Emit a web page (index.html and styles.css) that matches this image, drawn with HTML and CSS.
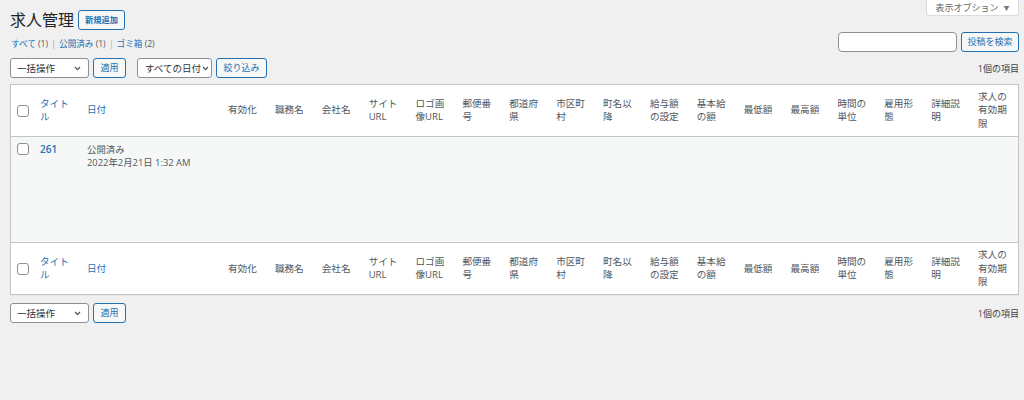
FILE: index.html
```html
<!DOCTYPE html>
<html lang="ja">
<head>
<meta charset="utf-8">
<title>求人管理</title>
<link rel="stylesheet" href="styles.css">
</head>
<body>
<div class="screen-meta-links">
  <button class="screen-tab">表示オプション <span class="tri">▼</span></button>
</div>
<div class="wrap">
  <div class="title-row">
    <h1>求人管理</h1>
    <a class="page-title-action" href="#">新規追加</a>
  </div>
  <div class="filter-row">
    <ul class="subsubsub">
      <li><a href="#">すべて</a> <span class="count">(1)</span> <span class="sep">|</span></li>
      <li><a href="#">公開済み</a> <span class="count">(1)</span> <span class="sep">|</span></li>
      <li><a href="#">ゴミ箱</a> <span class="count">(2)</span></li>
    </ul>
    <div class="search-box">
      <input class="search-input" type="search" aria-label="投稿を検索">
      <button class="button search-btn">投稿を検索</button>
    </div>
  </div>
  <div class="tablenav">
    <div class="select bulk"><span>一括操作</span><svg class="chev" width="7" height="5" viewBox="0 0 7 5"><polyline points="1,1 3.5,3.6 6,1" fill="none" stroke="#50575e" stroke-width="1.3"/></svg></div>
    <button class="button">適用</button>
    <div class="select date"><span>すべての日付</span><svg class="chev" width="7" height="5" viewBox="0 0 7 5"><polyline points="1,1 3.5,3.6 6,1" fill="none" stroke="#50575e" stroke-width="1.3"/></svg></div>
    <button class="button">絞り込み</button>
    <div class="displaying-num">1個の項目</div>
  </div>
  <table class="list-table">
    <colgroup>
      <col class="c-cb"><col class="c-title"><col class="c-date">
      <col><col><col><col><col><col><col><col><col><col><col><col><col><col><col><col><col>
    </colgroup>
    <thead>
      <tr>
        <th class="check"><span class="cb"></span></th>
        <th><a href="#">タイトル</a></th>
        <th><a href="#">日付</a></th>
        <th>有効化</th><th>職務名</th><th>会社名</th><th>サイトURL</th><th>ロゴ画像URL</th><th>郵便番号</th><th>都道府県</th><th>市区町村</th><th>町名以降</th><th>給与額の設定</th><th>基本給の額</th><th>最低額</th><th>最高額</th><th>時間の単位</th><th>雇用形態</th><th>詳細説明</th><th>求人の有効期限</th>
      </tr>
    </thead>
    <tbody>
      <tr>
        <td class="check"><span class="cb"></span></td>
        <td><a class="row-title" href="#">261</a></td>
        <td>公開済み<br>2022年2月21日 1:32 AM</td>
        <td></td><td></td><td></td><td></td><td></td><td></td><td></td><td></td><td></td><td></td><td></td><td></td><td></td><td></td><td></td><td></td><td></td>
      </tr>
    </tbody>
    <tfoot>
      <tr>
        <th class="check"><span class="cb"></span></th>
        <th><a href="#">タイトル</a></th>
        <th><a href="#">日付</a></th>
        <th>有効化</th><th>職務名</th><th>会社名</th><th>サイトURL</th><th>ロゴ画像URL</th><th>郵便番号</th><th>都道府県</th><th>市区町村</th><th>町名以降</th><th>給与額の設定</th><th>基本給の額</th><th>最低額</th><th>最高額</th><th>時間の単位</th><th>雇用形態</th><th>詳細説明</th><th>求人の有効期限</th>
      </tr>
    </tfoot>
  </table>
  <div class="tablenav bottom">
    <div class="select bulk"><span>一括操作</span><svg class="chev" width="7" height="5" viewBox="0 0 7 5"><polyline points="1,1 3.5,3.6 6,1" fill="none" stroke="#50575e" stroke-width="1.3"/></svg></div>
    <button class="button">適用</button>
    <div class="displaying-num">1個の項目</div>
  </div>
</div>
</body>
</html>
```
FILE: styles.css
```css
* { box-sizing: border-box; }

body {
  margin: 0;
  background: #f0f0f1;
  font-family: "Open Sans", "Noto Sans CJK JP", sans-serif;
  font-size: 9.75px;
  color: #50575e;
}

a { color: #2271b1; text-decoration: none; }

.screen-meta-links {
  float: right;
  margin-right: 5px;
}

.screen-tab {
  display: flex;
  align-items: center;
  justify-content: center;
  gap: 5px;
  width: 93px;
  height: 16px;
  padding: 0 0 1px;
  background: #fff;
  border: 1px solid #dcdcde;
  border-top: 0;
  border-radius: 0 0 3px 3px;
  font-family: inherit;
  font-size: 9px;
  color: #646970;
}

.screen-tab .tri { font-size: 6px; color: #787c82; }

.wrap {
  padding: 0 5px 0 10px;
}

.title-row {
  display: flex;
  align-items: center;
  padding-top: 10px;
}

.title-row h1 {
  margin: 0;
  font-size: 16px;
  line-height: 20px;
  font-weight: 400;
  color: #1d2327;
}

.page-title-action {
  margin-left: 4px;
  height: 20px;
  padding: 0 6px;
  line-height: 18px;
  border: 1px solid #2271b1;
  border-radius: 3px;
  background: #f6f7f7;
  font-size: 8.25px;
  font-weight: 600;
  color: #2271b1;
}

.filter-row {
  display: flex;
  justify-content: space-between;
  align-items: flex-start;
  margin-top: 2px;
}

.subsubsub {
  display: flex;
  gap: 3px;
  margin: 0;
  padding: 7px 0 0 1px;
  list-style: none;
  font-size: 8.6px;
  line-height: 11px;
  color: #50575e;
}

.subsubsub .sep { color: #a7aaad; margin-left: 1px; }

.search-box {
  display: flex;
}

.search-input {
  width: 119px;
  height: 20px;
  border: 1px solid #8c8f94;
  border-radius: 4px;
  background: #fff;
  margin: 0;
}

.button {
  height: 20px;
  margin: 0 0 0 4px;
  padding: 0 6.5px;
  border: 1px solid #2271b1;
  border-radius: 3px;
  background: #f6f7f7;
  color: #2271b1;
  font-family: inherit;
  font-size: 9px;
  line-height: 18px;
}

.search-btn { width: 58px; padding: 0; }

.tablenav {
  display: flex;
  align-items: center;
  height: 20px;
  margin-top: 6px;
}

.tablenav.bottom { margin-top: 8px; }

.select {
  display: flex;
  align-items: center;
  justify-content: space-between;
  height: 20px;
  padding: 0 7px 0 6px;
  border: 1px solid #8c8f94;
  border-radius: 3px;
  background: #fff;
  font-size: 9.5px;
  color: #2c3338;
}

.select.bulk { width: 79px; }
.select.date { width: 75px; margin-left: 11px; padding-left: 7px; padding-right: 2px; }

.displaying-num {
  margin-left: auto;
  font-size: 9px;
  color: #3c434a;
}

.list-table {
  width: 100%;
  margin-top: 6px;
  table-layout: fixed;
  border-collapse: separate;
  border-spacing: 0;
  border: 1px solid #c3c4c7;
  background: #fff;
  box-shadow: 0 1px 1px rgba(0, 0, 0, 0.04);
}

.c-cb { width: 22px; }
.c-title { width: 47px; }
.c-date { width: 141px; }

.list-table th {
  padding: 5px 7px 6px;
  text-align: left;
  vertical-align: middle;
  font-weight: 400;
  font-size: 9.6px;
  line-height: 13.4px;
  color: #50575e;
}

.list-table thead th { border-bottom: 1px solid #c3c4c7; }
.list-table tfoot th { border-top: 1px solid #c3c4c7; }

.list-table th.check,
.list-table td.check {
  padding: 0 0 0 6px;
}

.list-table td.check { padding-top: 6px; }

.cb {
  display: block;
  width: 12px;
  height: 12px;
  border: 1px solid #8c8f94;
  border-radius: 3px;
  background: #fff;
}

.list-table tbody td {
  height: 105px;
  padding: 6px 7px;
  vertical-align: top;
  background: #f6f7f7;
  font-size: 9.4px;
  line-height: 13px;
  color: #50575e;
}

.row-title {
  font-size: 10px;
  font-weight: 600;
  color: #2271b1;
}
```
